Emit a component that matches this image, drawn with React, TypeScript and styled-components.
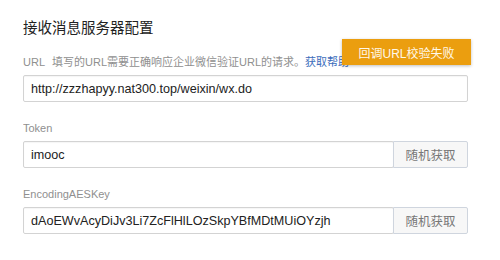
import React, { FC } from 'react'
import styled, { createGlobalStyle } from 'styled-components'

const GlobalStyle = createGlobalStyle`
  html, body {
    margin: 0;
    padding: 0;
    background: #fff;
  }
  body {
    font-family: "Liberation Sans", Arial, "Noto Sans CJK SC", sans-serif;
  }
`

type FieldProps = {
  label: React.ReactNode
  value: string
  action?: string
}

const Field: FC<FieldProps> = ({ label, value, action }) => (
  <FieldWrap>
    <Label>{label}</Label>
    <InputGroup>
      <Input readOnly value={value} />
      {action && <AddonButton type="button">{action}</AddonButton>}
    </InputGroup>
  </FieldWrap>
)

const App: FC = () => (
  <>
    <GlobalStyle />
    <Page>
      <Title>接收消息服务器配置</Title>
      <UrlField>
        <Field
          label={
            <>
              URL<Hint>填写的URL需要正确响应企业微信验证URL的请求。</Hint>
              <HelpLink>获取帮助</HelpLink>
            </>
          }
          value="http://zzzhapyy.nat300.top/weixin/wx.do"
        />
        <Toast>回调URL校验失败</Toast>
      </UrlField>
      <Field label="Token" value="imooc" action="随机获取" />
      <Field
        label="EncodingAESKey"
        value="dAoEWvAcyDiJv3Li7ZcFlHlLOzSkpYBfMDtMUiOYzjh"
        action="随机获取"
      />
    </Page>
  </>
)

export default App

const Page = styled.div`
  width: 445px;
  padding: 17px 0 0 23px;
  display: flex;
  flex-direction: column;
  gap: 19px;
`

const Title = styled.h2`
  margin: 0 0 -1px;
  font-family: "Noto Sans CJK SC", sans-serif;
  font-size: 14.5px;
  font-weight: 400;
  line-height: 20px;
  color: #222;
`

const UrlField = styled.div`
  position: relative;
`

const FieldWrap = styled.div`
  display: flex;
  flex-direction: column;
  gap: 6px;
`

const Label = styled.div`
  font-size: 11px;
  line-height: 14px;
  color: #8f8f8f;
  white-space: nowrap;
  overflow: hidden;
`

const Hint = styled.span`
  margin-left: 7px;
`

const HelpLink = styled.a`
  color: #3b6dbb;
  cursor: pointer;
`

const InputGroup = styled.div`
  display: flex;
  height: 27px;
`

const Input = styled.input`
  flex: 1;
  min-width: 0;
  box-sizing: border-box;
  height: 27px;
  margin: 0;
  padding: 0 7px;
  border: 1px solid #d3d3d3;
  border-radius: 2px;
  box-shadow: inset 0 1px 1px rgba(0, 0, 0, 0.04);
  font-family: "Liberation Sans", Arial, sans-serif;
  font-size: 12.6px;
  color: #222;
  outline: none;
  background: #fff;
`

const AddonButton = styled.button`
  flex: none;
  width: 75px;
  height: 27px;
  margin: 0 0 0 -1px;
  padding: 0;
  box-sizing: border-box;
  border: 1px solid #cfd5de;
  border-radius: 0 2px 2px 0;
  background: #f7f7f7;
  font-family: "Noto Sans CJK SC", sans-serif;
  font-size: 12.5px;
  color: #777;
  cursor: pointer;
`

const Toast = styled.div`
  position: absolute;
  top: -16px;
  left: 319px;
  width: 129px;
  height: 26px;
  display: flex;
  align-items: center;
  justify-content: center;
  background: #eb9e0f;
  color: #fff8ea;
  font-family: "Liberation Sans", Arial, "Noto Sans CJK SC", sans-serif;
  font-size: 12px;
  box-shadow: 0 1px 3px rgba(0, 0, 0, 0.25);
`
